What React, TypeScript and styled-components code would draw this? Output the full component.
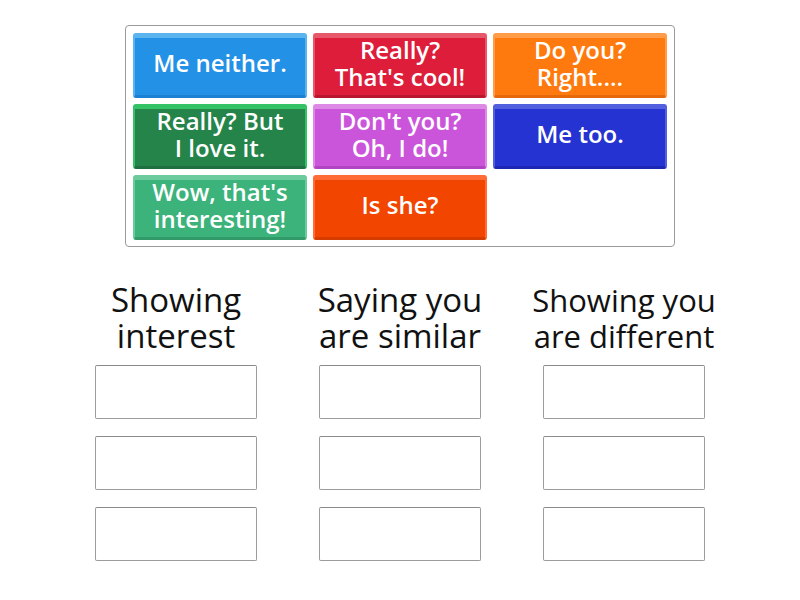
import React from "react";
import styled, { createGlobalStyle } from "styled-components";

const GlobalStyle = createGlobalStyle`
  body {
    margin: 0;
    background: #ffffff;
    font-family: "Open Sans", "Liberation Sans", sans-serif;
  }
`;

const Page = styled.div`
  width: 800px;
  height: 600px;
  display: flex;
  flex-direction: column;
  align-items: center;
  padding-top: 25px;
  box-sizing: border-box;
`;

const Bank = styled.div`
  width: 550px;
  box-sizing: border-box;
  border: 1px solid #9a9a9a;
  border-radius: 4px;
  padding: 7px 7px 6px 7px;
  display: grid;
  grid-template-columns: repeat(3, 174px);
  grid-auto-rows: 65px;
  column-gap: 6px;
  row-gap: 6px;
`;

type TileColors = { face: string; rim: string; base: string };

const Tile = styled.div<{ $c: TileColors }>`
  box-sizing: border-box;
  border-radius: 3px;
  background: ${(p) => p.$c.face};
  border-top: 5px solid ${(p) => p.$c.rim};
  border-left: 2px solid ${(p) => p.$c.rim};
  border-right: 2px solid ${(p) => p.$c.rim};
  border-bottom: 3px solid ${(p) => p.$c.base};
  display: flex;
  align-items: center;
  justify-content: center;
  text-align: center;
  color: #ffffff;
  font-weight: 600;
  font-size: 24px;
  line-height: 27px;
  padding-bottom: 8px;
  white-space: nowrap;
`;

const Groups = styled.div`
  margin-top: 35px;
  display: grid;
  grid-template-columns: repeat(3, 210px);
  column-gap: 14px;
`;

const Group = styled.div`
  display: flex;
  flex-direction: column;
  align-items: center;
`;

const Heading = styled.div<{ $size: number }>`
  font-size: ${(p) => p.$size}px;
  line-height: 36px;
  color: #111111;
  text-align: center;
  white-space: nowrap;
  height: 72px;
  margin-bottom: 11px;
`;

const Slots = styled.div`
  display: flex;
  flex-direction: column;
  gap: 17px;
`;

const Slot = styled.div`
  width: 162px;
  height: 54px;
  box-sizing: border-box;
  border: 1px solid #9c9c9c;
  border-top-color: #8a8a8a;
  border-radius: 2px;
  background: #ffffff;
`;

const colors: Record<string, TileColors> = {
  blue: { face: "#2391e6", rim: "#5cb4ef", base: "#1b7fd2" },
  red: { face: "#dd1d3a", rim: "#e6586a", base: "#b9172f" },
  orange: { face: "#ff7a0e", rim: "#ff9c48", base: "#e5680a" },
  green: { face: "#24844a", rim: "#33c266", base: "#1e7040" },
  pink: { face: "#cb55da", rim: "#dc8ae6", base: "#b243c2" },
  navy: { face: "#2533d2", rim: "#5260e0", base: "#1c28b4" },
  teal: { face: "#3cb37b", rim: "#6ccb9d", base: "#329a69" },
  flame: { face: "#f24500", rim: "#ff6c38", base: "#d43c00" },
};

const tiles: { text: React.ReactNode; c: TileColors }[] = [
  { text: "Me neither.", c: colors.blue },
  { text: <>Really?<br />That's cool!</>, c: colors.red },
  { text: <>Do you?<br />Right....</>, c: colors.orange },
  { text: <>Really? But<br />I love it.</>, c: colors.green },
  { text: <>Don't you?<br />Oh, I do!</>, c: colors.pink },
  { text: "Me too.", c: colors.navy },
  { text: <>Wow, that's<br />interesting!</>, c: colors.teal },
  { text: "Is she?", c: colors.flame },
];

const groups: { title: React.ReactNode; size: number }[] = [
  { title: <>Showing<br />interest</>, size: 33 },
  { title: <>Saying you<br />are similar</>, size: 33 },
  { title: <>Showing you<br />are different</>, size: 31 },
];

export default function App() {
  return (
    <>
      <GlobalStyle />
      <Page>
        <Bank>
          {tiles.map((t, i) => (
            <Tile key={i} $c={t.c}>
              <span>{t.text}</span>
            </Tile>
          ))}
        </Bank>
        <Groups>
          {groups.map((g, i) => (
            <Group key={i}>
              <Heading $size={g.size}>{g.title}</Heading>
              <Slots>
                <Slot />
                <Slot />
                <Slot />
              </Slots>
            </Group>
          ))}
        </Groups>
      </Page>
    </>
  );
}
